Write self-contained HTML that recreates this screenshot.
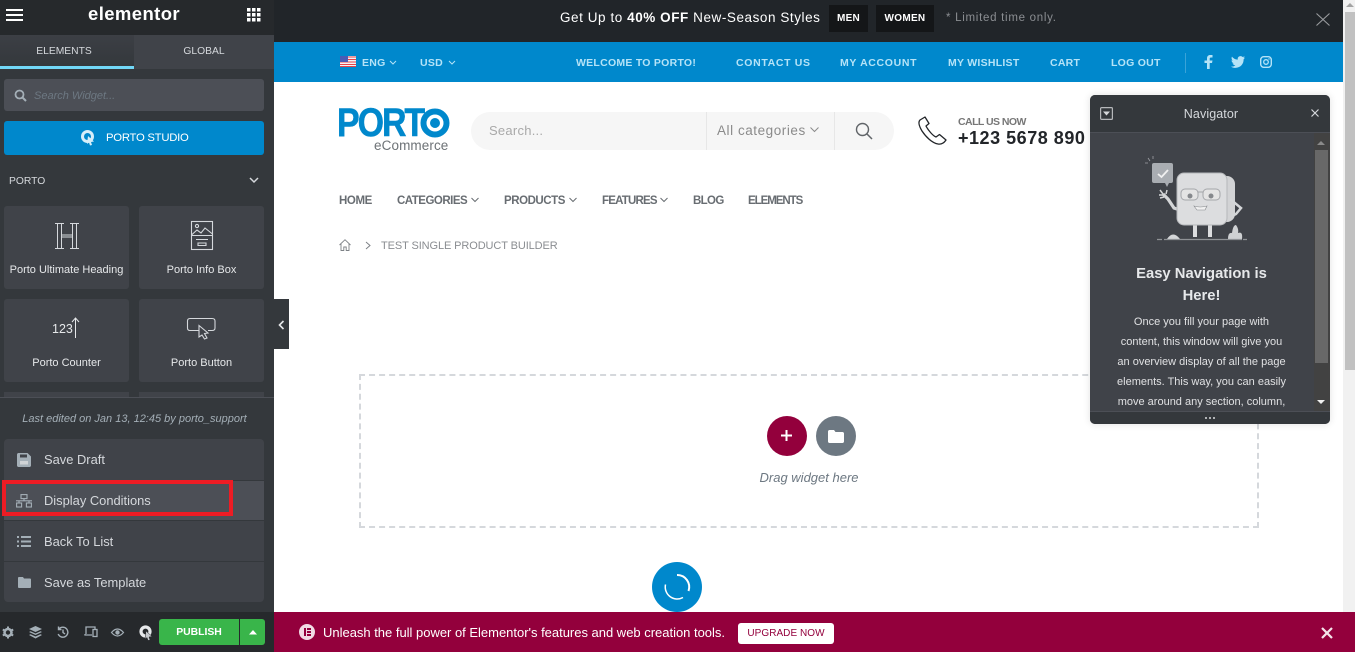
<!DOCTYPE html>
<html><head><meta charset="utf-8">
<style>
html,body{margin:0;padding:0;width:1355px;height:652px;overflow:hidden;background:#fff;font-family:"Liberation Sans",sans-serif}
#r{position:relative;width:1355px;height:652px;overflow:hidden}
.a{position:absolute}
.t{position:absolute;white-space:nowrap;line-height:16px}
.c{text-align:center}
svg{position:absolute;overflow:visible}
</style></head><body><div id="r">

<!-- main top -->
<div class="a" style="left:274px;top:0;width:1069px;height:42px;background:#212529"></div>
<div class="a" style="left:274px;top:42px;width:1069px;height:40px;background:#0088cc"></div>
<div class="a" style="left:1343px;top:0;width:12px;height:612px;background:#f1f1f1"></div>
<div class="a" style="left:1345px;top:12px;width:10px;height:358px;background:#c1c1c1"></div>
<svg style="left:1346px;top:2px" width="8" height="6"><path d="M4 1L8 5H0Z" fill="#a3a3a3"/></svg>

<div class="t" style="left:560px;top:10px;font-size:13.5px;color:#fff;letter-spacing:.56px">Get Up to <b>40% OFF</b> New-Season Styles</div>
<div class="a" style="left:829px;top:5px;width:39px;height:27px;background:#141618"></div>
<div class="t c" style="left:829px;top:11px;width:39px;font-size:10px;font-weight:bold;color:#fff;letter-spacing:.3px">MEN</div>
<div class="a" style="left:876px;top:5px;width:58px;height:27px;background:#141618"></div>
<div class="t c" style="left:876px;top:11px;width:58px;font-size:10px;font-weight:bold;color:#fff;letter-spacing:.3px">WOMEN</div>
<div class="t" style="left:946px;top:10px;font-size:11.5px;color:#8b8e92;letter-spacing:.72px">* Limited time only.</div>
<svg style="left:1316px;top:13px" width="14" height="13"><path d="M.5 .5L13.5 12.5M13.5 .5L.5 12.5" stroke="#9a9c9f" stroke-width="1.1" fill="none"/></svg>

<!-- blue bar -->
<svg style="left:340px;top:56px" width="16" height="11">
<rect width="16" height="11" fill="#f4f4f4"/><path d="M0 1h16M0 3.5h16M0 6h16M0 8.500h16" stroke="#e8424a" stroke-width="1.100"/><rect y="10" width="16" height="1" fill="#e8424a"/><rect width="8" height="6" fill="#4a5bb5"/></svg>
<div class="t" style="left:362px;top:55px;font-size:10.500px;font-weight:bold;color:#b5e3f7;letter-spacing:.3px">ENG</div>
<svg style="left:389px;top:60px" width="8" height="6"><path d="M1 1L4 4L7 1" stroke="#b5e3f7" fill="none"/></svg>
<div class="t" style="left:420px;top:55px;font-size:10.500px;font-weight:bold;color:#b5e3f7;letter-spacing:.3px">USD</div>
<svg style="left:448px;top:60px" width="8" height="6"><path d="M1 1L4 4L7 1" stroke="#b5e3f7" fill="none"/></svg>
<div class="t" style="left:576px;top:55px;font-size:10.500px;font-weight:bold;color:#b5e3f7;letter-spacing:.26px">WELCOME TO PORTO!</div>
<div class="t" style="left:736px;top:55px;font-size:10.500px;font-weight:bold;color:#b5e3f7;letter-spacing:.66px">CONTACT US</div>
<div class="t" style="left:840px;top:55px;font-size:10.500px;font-weight:bold;color:#b5e3f7;letter-spacing:.66px">MY ACCOUNT</div>
<div class="t" style="left:948px;top:55px;font-size:10.500px;font-weight:bold;color:#b5e3f7;letter-spacing:.26px">MY WISHLIST</div>
<div class="t" style="left:1050px;top:55px;font-size:10.500px;font-weight:bold;color:#b5e3f7;letter-spacing:.26px">CART</div>
<div class="t" style="left:1111px;top:55px;font-size:10.500px;font-weight:bold;color:#b5e3f7;letter-spacing:.26px">LOG OUT</div>
<div class="a" style="left:1185px;top:53px;width:1px;height:20px;background:#3aa3d8"></div>
<svg style="left:1204px;top:55px" width="10" height="14"><path d="M3 14V8H.5V5.500H3V3.500C3 1.200 4.300 0 6.300 0H8.500V2.500H7C6 2.500 5.700 3 5.700 3.800V5.500H8.500L8 8H5.700V14Z" fill="#b5e3f7"/></svg>
<svg style="left:1231px;top:56px" width="14" height="12"><path d="M14 1.500C13.500 1.800 12.900 2 12.300 2C13 1.600 13.400 1 13.600 .3C13 .7 12.300 .9 11.600 1C10.400 -.3 8.200 -.1 7.200 1.200C6.700 1.900 6.600 2.800 6.800 3.600C4.300 3.500 2.200 2.300 1 .6C.2 2 .6 3.800 1.900 4.700C1.400 4.700 .9 4.500 .5 4.300C.5 5.800 1.500 7 2.900 7.300C2.500 7.400 2 7.400 1.600 7.300C2 8.500 3.100 9.300 4.400 9.400C3.100 10.400 1.500 10.800 0 10.600C3.300 12.800 8 12.100 10.500 9.300C12 7.600 12.700 5.400 12.600 3.400C13.100 2.900 13.600 2.300 14 1.500Z" fill="#b5e3f7"/></svg>
<svg style="left:1260px;top:56px" width="12" height="12"><rect x=".7" y=".7" width="10.600" height="10.600" rx="3" fill="none" stroke="#b5e3f7" stroke-width="1.400"/><circle cx="6" cy="6" r="2.300" fill="none" stroke="#b5e3f7" stroke-width="1.300"/><circle cx="9" cy="3" r=".7" fill="#b5e3f7"/></svg>

<!-- logo -->
<div class="t" style="left:337px;top:104px;font-size:39.500px;line-height:38px;font-weight:bold;color:#0088cc;letter-spacing:-2.400px;-webkit-text-stroke:.5px #0088cc;transform:scaleX(.86);transform-origin:0 0">PORT</div>
<svg style="left:418px;top:108px" width="32" height="32"><circle cx="17" cy="15" r="11.500" fill="#fff" stroke="#0088cc" stroke-width="6"/><circle cx="17" cy="15" r="5" fill="#0088cc"/></svg>
<div class="t" style="left:374px;top:138px;font-size:13.500px;color:#6d7276;letter-spacing:.1px">eCommerce</div>

<!-- search -->
<div class="a" style="left:471px;top:112px;width:423px;height:38px;border-radius:19px;background:#f6f6f6"></div>
<div class="a" style="left:706px;top:112px;width:1px;height:38px;background:#e7e7e7"></div>
<div class="a" style="left:834px;top:112px;width:1px;height:38px;background:#e7e7e7"></div>
<div class="t" style="left:489px;top:123px;font-size:13px;color:#a9a9a9;letter-spacing:.25px">Search...</div>
<div class="t" style="left:717px;top:123px;font-size:13.500px;color:#8b8b8b;letter-spacing:.55px">All categories</div>
<svg style="left:810px;top:127px" width="9" height="6"><path d="M.5 .5L4.500 4.500L8.500 .5" stroke="#8b8b8b" fill="none"/></svg>
<svg style="left:855px;top:122px" width="18" height="18"><circle cx="7.500" cy="7.500" r="6" fill="none" stroke="#606468" stroke-width="1.400"/><path d="M12 12L17 17" stroke="#606468" stroke-width="1.500"/></svg>

<!-- phone -->
<svg style="left:918px;top:116px" width="29" height="29"><path d="M7 1L2 4C0 6 1 10 4 15C8 21 14 27 20 28C23 28.500 26 27 28 24L21.500 18.500L18 21C15 20 10 14 8 10L11 7.500Z" fill="none" stroke="#222529" stroke-width="1.300" stroke-linejoin="round"/></svg>
<div class="t" style="left:958px;top:114px;font-size:10.500px;font-weight:bold;color:#777;letter-spacing:-.55px">CALL US NOW</div>
<div class="t" style="left:958px;top:127px;font-size:18px;line-height:22px;font-weight:bold;color:#222529;letter-spacing:.52px">+123 5678 890</div>

<!-- nav -->
<div class="t" style="left:339px;top:193px;font-size:11.500px;font-weight:bold;color:#686d72;letter-spacing:-.4px">HOME</div>
<div class="t" style="left:397px;top:193px;font-size:11.500px;font-weight:bold;color:#686d72;letter-spacing:-.5px">CATEGORIES</div>
<svg style="left:471px;top:197px" width="8" height="6"><path d="M.5 1L4 4.500L7.500 1" stroke="#686d72" fill="none"/></svg>
<div class="t" style="left:504px;top:193px;font-size:11.500px;font-weight:bold;color:#686d72;letter-spacing:-.45px">PRODUCTS</div>
<svg style="left:569px;top:197px" width="8" height="6"><path d="M.5 1L4 4.500L7.500 1" stroke="#686d72" fill="none"/></svg>
<div class="t" style="left:602px;top:193px;font-size:11.500px;font-weight:bold;color:#686d72;letter-spacing:-.8px">FEATURES</div>
<svg style="left:660px;top:197px" width="8" height="6"><path d="M.5 1L4 4.500L7.500 1" stroke="#686d72" fill="none"/></svg>
<div class="t" style="left:693px;top:193px;font-size:11.500px;font-weight:bold;color:#686d72;letter-spacing:-.65px">BLOG</div>
<div class="t" style="left:748px;top:193px;font-size:11.500px;font-weight:bold;color:#686d72;letter-spacing:-1.05px">ELEMENTS</div>

<!-- breadcrumb -->
<svg style="left:339px;top:239px" width="12" height="12"><path d="M.5 6L6 .7L11.500 6M2 5V11.500H4.800V8H7.200V11.500H10V5" fill="none" stroke="#7d8186" stroke-width=".9"/></svg>
<svg style="left:365px;top:241px" width="6" height="9"><path d="M1 1L5 4.500L1 8" fill="none" stroke="#7d8186"/></svg>
<div class="t" style="left:381px;top:238px;font-size:11px;color:#8a8d91;letter-spacing:-.1px">TEST SINGLE PRODUCT BUILDER</div>

<!-- drop zone -->
<div class="a" style="left:359px;top:374px;width:896px;height:150px;border:2px dashed #d5d8dc"></div>
<div class="a" style="left:767px;top:416px;width:40px;height:40px;border-radius:50%;background:#93003c"></div>
<svg style="left:780px;top:429px" width="13" height="13"><path d="M6.500 1V12M1 6.500H12" stroke="#fff" stroke-width="2"/></svg>
<div class="a" style="left:816px;top:416px;width:40px;height:40px;border-radius:50%;background:#6d7882"></div>
<svg style="left:828px;top:430px" width="16" height="13"><path d="M1.500 0H6L7.500 2H14.500C15.300 2 16 2.700 16 3.500V11.500C16 12.300 15.300 13 14.500 13H1.500C.7 13 0 12.300 0 11.500V1.500C0 .7 .7 0 1.500 0Z" fill="#fff"/></svg>
<div class="t c" style="left:709px;top:470px;width:200px;font-size:13px;font-style:italic;color:#6d7882">Drag widget here</div>

<div class="a" style="left:652px;top:562px;width:50px;height:50px;border-radius:50%;background:#0088cc"></div>
<svg style="left:664px;top:574px" width="26" height="26"><path d="M1.500 10.500A12 12 0 0 0 19 23.500" fill="none" stroke="#fff" stroke-width="1.500"/><path d="M13 1A12 12 0 0 1 24.500 17" fill="none" stroke="#fff" stroke-width="2"/></svg>

<!-- bottom promo -->
<div class="a" style="left:274px;top:612px;width:1081px;height:40px;background:#93003c"></div>
<div class="a" style="left:299px;top:624px;width:16px;height:16px;border-radius:50%;background:#f1dbe4"></div>
<div class="a" style="left:304px;top:628px;width:1.500px;height:8px;background:#93003c"></div>
<div class="a" style="left:307px;top:628px;width:4px;height:1.500px;background:#93003c"></div>
<div class="a" style="left:307px;top:631px;width:4px;height:1.500px;background:#93003c"></div>
<div class="a" style="left:307px;top:634px;width:4px;height:1.500px;background:#93003c"></div>
<div class="t" style="left:323px;top:625px;font-size:13px;font-weight:500;color:#fff;letter-spacing:-.012px">Unleash the full power of Elementor's features and web creation tools.</div>
<div class="a" style="left:738px;top:623px;width:96px;height:21px;border-radius:3px;background:#fff"></div>
<div class="t c" style="left:738px;top:626px;width:96px;font-size:10px;color:#93003c;letter-spacing:.05px">UPGRADE NOW</div>
<svg style="left:1321px;top:627px" width="12" height="12"><path d="M1 1L11 11M11 1L1 11" stroke="#f5e4ea" stroke-width="2.200"/></svg>

<!-- Navigator -->
<div class="a" style="left:1090px;top:95px;width:240px;height:329px;border-radius:5px;background:#404349;box-shadow:0 0 8px rgba(0,0,0,.12);overflow:hidden">
  <div class="a" style="left:0;top:0;width:240px;height:37px;background:#34383c;border-bottom:1px solid #4c4f56"></div>
  <div class="a" style="left:224px;top:38px;width:16px;height:278px;background:#424242"></div>
  <div class="a" style="left:225px;top:55px;width:13px;height:213px;background:#686868"></div>
  <div class="a" style="left:0;top:316px;width:240px;height:13px;background:#34383c;border-top:1px solid #4c4f56;box-sizing:border-box"></div>
</div>
<svg style="left:1316px;top:140px" width="10" height="6"><path d="M5 1L9 5H1Z" fill="#8a8a8a"/></svg>
<svg style="left:1316px;top:399px" width="10" height="6"><path d="M5 5L9 1H1Z" fill="#f0f0f0"/></svg>
<svg style="left:1100px;top:107px" width="13" height="13"><rect x=".6" y=".6" width="11.800" height="11.800" rx="1" fill="none" stroke="#b5b7ba" stroke-width="1.200"/><path d="M3 4.500H10L6.500 8.500Z" fill="#d5d7da"/></svg>
<div class="t c" style="left:1150px;top:106px;width:122px;font-size:12.500px;color:#d5d8dc;letter-spacing:.1px">Navigator</div>
<svg style="left:1310px;top:108px" width="10" height="10"><path d="M1.500 1.500L8.500 8.500M8.500 1.500L1.500 8.500" stroke="#d5d8dc" stroke-width="1.200"/></svg>
<svg style="left:1205px;top:417px" width="10" height="2" fill="#b0b2b5"><rect width="2" height="2"/><rect x="4" width="2" height="2"/><rect x="8" width="2" height="2"/></svg>

<!-- Illustration -->
<svg style="left:1130px;top:150px" width="130" height="100">
<path d="M20 11l-2-3M23 9v-3M18 13h-3" stroke="#9ea1a6" stroke-width=".8"/>
<rect x="22" y="13" width="21" height="20" rx="2" fill="#a9adb2"/>
<path d="M35 33L37 37L39 33Z" fill="#a9adb2"/>
<path d="M28 24L31.500 27L38 20" fill="none" stroke="#f0f0f0" stroke-width="1.800"/>
<path d="M33 44L38 49L44 58L50 60" fill="none" stroke="#d4d6d8" stroke-width="3.200"/>
<path d="M33 44l-3-4M36 44l1-4M33 45l-4 0M34 47l-4 1" stroke="#d4d6d8" stroke-width="1.500"/>
<rect x="55" y="26" width="50" height="46" rx="8" fill="#d2d3d5"/>
<path d="M100 49L111 58L106 64L102 66" fill="none" stroke="#d4d6d8" stroke-width="2.500"/>
<path d="M65 74V87M80 74V87" stroke="#dcdddf" stroke-width="4"/>
<rect x="47" y="23" width="50" height="52" rx="7" fill="#dcdddf" stroke="#b5b7ba"/>
<rect x="51" y="39" width="17" height="11" rx="4" fill="#e4e4e4" stroke="#a4a6aa"/>
<rect x="73" y="39" width="17" height="11" rx="4" fill="#e4e4e4" stroke="#a4a6aa"/>
<path d="M68 42h5" stroke="#a4a6aa"/>
<circle cx="60" cy="46" r="2.500" fill="#85888c"/><circle cx="81" cy="46" r="2.500" fill="#85888c"/>
<path d="M64 56Q70 58 77 56L75 60H67Z" fill="#f1f1f1" stroke="#85888c" stroke-width=".6"/>
<path d="M37 89Q43 80 50 89Z" fill="#d4d6d8"/>
<path d="M98 89Q98 82 102 83Q103 75 106 75Q109 79 108 83Q113 81 112 89Z" fill="#cfd1d3"/>
<path d="M27 89.500H32M34 89.500H112M113 89.500H117" stroke="#8f9296" stroke-width="1.200"/>
</svg>

<div class="t c" style="left:1100px;top:263px;width:203px;font-size:14.800px;line-height:22px;font-weight:bold;color:#e6e8ea;white-space:normal">Easy Navigation is<br>Here!</div>
<div class="t c" style="left:1100px;top:312px;width:203px;font-size:11px;line-height:20px;color:#e0e1e3">Once you fill your page with<br>content, this window will give you<br>an overview display of all the page<br>elements. This way, you can easily<br>move around any section, column,</div>

<!-- Sidebar -->
<div class="a" style="left:0;top:0;width:274px;height:652px;background:#34383c"></div>
<div class="a" style="left:0;top:0;width:274px;height:35px;background:#26292c"></div>
<div class="a" style="left:6px;top:9px;width:17px;height:2px;background:#fff"></div>
<div class="a" style="left:6px;top:14px;width:17px;height:2px;background:#fff"></div>
<div class="a" style="left:6px;top:19px;width:17px;height:2px;background:#fff"></div>
<div class="t" style="left:88px;top:4px;font-size:18.500px;line-height:20px;font-weight:bold;color:#fff;letter-spacing:.4px">elementor</div>
<svg style="left:247px;top:8px" width="14" height="14" fill="#fff"><rect width="3.500" height="3.500"/><rect x="5" width="3.500" height="3.500"/><rect x="10" width="3.500" height="3.500"/><rect y="5" width="3.500" height="3.500"/><rect x="5" y="5" width="3.500" height="3.500"/><rect x="10" y="5" width="3.500" height="3.500"/><rect y="10" width="3.500" height="3.500"/><rect x="5" y="10" width="3.500" height="3.500"/><rect x="10" y="10" width="3.500" height="3.500"/></svg>

<div class="a" style="left:0;top:35px;width:134px;height:31px;background:linear-gradient(#3c3f45,#34383c)"></div>
<div class="a" style="left:0;top:66px;width:134px;height:3px;background:#71d7f7"></div>
<div class="a" style="left:134px;top:35px;width:140px;height:34px;background:#404349"></div>
<div class="t c" style="left:0;top:44px;width:128px;font-size:10.300px;color:#d5d8dc">ELEMENTS</div>
<div class="t c" style="left:134px;top:44px;width:140px;font-size:10.300px;color:#d5d8dc">GLOBAL</div>

<div class="a" style="left:4px;top:79px;width:260px;height:32px;border-radius:3px;background:#4c4f56"></div>
<svg style="left:14px;top:89px" width="13" height="13"><circle cx="5.500" cy="5.500" r="4" fill="none" stroke="#a4afb7" stroke-width="1.800"/><path d="M8.500 8.500L12 12" stroke="#a4afb7" stroke-width="2"/></svg>
<div class="t" style="left:34px;top:88px;font-size:11px;font-style:italic;color:#6d7882">Search Widget...</div>

<div class="a" style="left:4px;top:121px;width:260px;height:34px;border-radius:3px;background:#0088cc"></div>
<svg style="left:81px;top:130px" width="14" height="16"><circle cx="6.500" cy="6.500" r="5" fill="none" stroke="#d7eef9" stroke-width="3"/><path d="M7 6L13 11.500L10 12L11 15L9 15.500L8 12.500L6 14Z" fill="#d7eef9"/></svg>
<div class="t" style="left:106px;top:130px;font-size:11.300px;letter-spacing:-.25px;color:#fff">PORTO STUDIO</div>

<div class="t" style="left:9px;top:174px;font-size:10.300px;color:#d5d8dc">PORTO</div>
<svg style="left:249px;top:177px" width="10" height="7"><path d="M1 1L5 5L9 1" stroke="#d5d8dc" stroke-width="1.500" fill="none"/></svg>

<div class="a" style="left:4px;top:206px;width:125px;height:83px;border-radius:3px;background:#404349"></div>
<div class="a" style="left:139px;top:206px;width:125px;height:83px;border-radius:3px;background:#404349"></div>
<div class="a" style="left:4px;top:299px;width:125px;height:83px;border-radius:3px;background:#404349"></div>
<div class="a" style="left:139px;top:299px;width:125px;height:83px;border-radius:3px;background:#404349"></div>
<div class="a" style="left:4px;top:392px;width:125px;height:5px;background:#404349"></div>
<div class="a" style="left:139px;top:392px;width:125px;height:5px;background:#404349"></div>

<svg style="left:55px;top:223px" width="24" height="26" fill="none" stroke="#d5d8dc" stroke-width="1"><path d="M0 .5H9M15 .5H24M0 25.500H9M15 25.500H24M2.500 .5V25.500M6.500 .5V25.500M17.500 .5V25.500M21.500 .5V25.500M6.500 12H17.500M6.500 14H17.500"/></svg>
<svg style="left:191px;top:221px" width="22" height="29" fill="none" stroke="#d5d8dc" stroke-width="1.100"><rect x=".5" y=".5" width="21" height="28"/><path d="M.5 14L6 9L10 12L14 7L21.500 13M.5 14.500H21.500M5 18.500H17M7 22H15V24.500H7Z"/><circle cx="6" cy="5" r="1.600"/></svg>
<div class="t c" style="left:4px;top:262px;width:125px;font-size:11px;color:#e6e8ea">Porto Ultimate Heading</div>
<div class="t c" style="left:139px;top:262px;width:125px;font-size:11px;color:#e6e8ea">Porto Info Box</div>

<div class="t" style="left:52px;top:321px;font-size:12.500px;color:#e6e8ea">123</div>
<svg style="left:71px;top:317px" width="9" height="21"><path d="M4.500 21V1M1 5L4.500 1L8 5" fill="none" stroke="#e6e8ea" stroke-width="1"/></svg>
<svg style="left:187px;top:318px" width="29" height="22" fill="none" stroke="#d5d8dc" stroke-width="1.100"><path d="M12 12.500H3Q.5 12.500 .5 10V3Q.5 .5 3 .5H25Q28 .5 28 3V10Q28 12.500 25 12.500H21"/><path d="M12 7.500L21 15L17.500 15.500L20 20L17.500 21L15 17L12 19Z" fill="#404349"/></svg>
<div class="t c" style="left:4px;top:355px;width:125px;font-size:11px;color:#e6e8ea">Porto Counter</div>
<div class="t c" style="left:139px;top:355px;width:125px;font-size:11px;color:#e6e8ea">Porto Button</div>

<div class="a" style="left:0;top:397px;width:274px;height:215px;background:#34383c;border-top:1px solid #4c4f56;box-sizing:border-box"></div>
<div class="t c" style="left:0;top:411px;width:269px;font-size:11px;font-style:italic;color:#a4afb7">Last edited on Jan 13, 12:45 by porto_support</div>

<div class="a" style="left:4px;top:439px;width:260px;height:163px;border-radius:4px;background:#404349"></div>
<div class="a" style="left:4px;top:480px;width:260px;height:40px;background:#4c4f56"></div>
<div class="a" style="left:4px;top:480px;width:260px;height:1px;background:#34383c"></div>
<div class="a" style="left:4px;top:520px;width:260px;height:1px;background:#34383c"></div>
<div class="a" style="left:4px;top:561px;width:260px;height:1px;background:#34383c"></div>

<svg style="left:17px;top:453px" width="14" height="14"><path d="M1.500 0H10.500L14 3.500V12.500C14 13.300 13.300 14 12.500 14H1.500C.7 14 0 13.300 0 12.500V1.500C0 .7 .7 0 1.500 0Z" fill="#a4afb7"/><rect x="3" y="1.500" width="7" height="3" fill="#404349"/><rect x="3" y="8" width="8" height="3.500" fill="#d0d3d6"/></svg>
<div class="t" style="left:44px;top:452px;font-size:12.900px;color:#d5d8dc">Save Draft</div>

<svg style="left:16px;top:494px" width="16" height="14" fill="none" stroke="#a4afb7" stroke-width="1.100"><rect x="5" y=".6" width="6" height="4"/><rect x=".6" y="9" width="5" height="4"/><rect x="10.400" y="9" width="5" height="4"/><path d="M0 6.800H16M3 6.800V9M13 6.800V9M8 4.600V6.800"/></svg>
<div class="t" style="left:44px;top:493px;font-size:12.900px;color:#d5d8dc">Display Conditions</div>

<svg style="left:17px;top:536px" width="14" height="11" fill="#a4afb7"><rect width="2" height="2"/><rect x="4" width="10" height="2"/><rect y="4.500" width="2" height="2"/><rect x="4" y="4.500" width="10" height="2"/><rect y="9" width="2" height="2"/><rect x="4" y="9" width="10" height="2"/></svg>
<div class="t" style="left:44px;top:534px;font-size:12.900px;color:#d5d8dc">Back To List</div>

<svg style="left:18px;top:577px" width="13" height="11"><path d="M1 0H5L6 1.500H12C12.600 1.500 13 1.900 13 2.500V10C13 10.600 12.600 11 12 11H1C.4 11 0 10.600 0 10V1C0 .4 .4 0 1 0Z" fill="#a4afb7"/></svg>
<div class="t" style="left:44px;top:575px;font-size:12.900px;color:#d5d8dc">Save as Template</div>

<!-- red highlight -->
<div class="a" style="left:2px;top:480px;width:223px;height:28px;border:4px solid #ed1c24"></div>

<!-- collapse -->
<div class="a" style="left:274px;top:299px;width:15px;height:50px;background:#34383c"></div>
<svg style="left:278px;top:320px" width="7" height="10"><path d="M5.500 1L1.500 5L5.500 9" stroke="#e6e8ea" stroke-width="1.600" fill="none"/></svg>

<!-- bottom bar -->
<div class="a" style="left:0;top:612px;width:274px;height:40px;background:#26292c"></div>
<svg style="left:2px;top:626px" width="12" height="13"><circle cx="6" cy="6.500" r="3.500" fill="none" stroke="#a4afb7" stroke-width="2.600"/><path d="M6 .5V2.500M6 10.500V12.500M.8 3.500L2.500 4.500M9.500 8.500L11.200 9.500M.8 9.500L2.500 8.500M9.500 4.500L11.200 3.500" stroke="#a4afb7" stroke-width="2"/></svg>
<svg style="left:29px;top:626px" width="13" height="13" fill="#a4afb7"><path d="M6.500 0L13 3L6.500 6L0 3Z"/><path d="M1.500 5.200L6.500 7.500L11.500 5.200L13 6L6.500 9L0 6Z"/><path d="M1.500 8.200L6.500 10.500L11.500 8.200L13 9L6.500 12.500L0 9Z"/></svg>
<svg style="left:57px;top:626px" width="12" height="13" fill="none" stroke="#a4afb7" stroke-width="1.400"><path d="M2 3A5 5 0 1 1 1.200 8M1.500 .5V3.500H4.500M6 3.500V6.500L8 8"/></svg>
<svg style="left:84px;top:626px" width="14" height="12" fill="none" stroke="#a4afb7" stroke-width="1.300"><path d="M8 9H1V8M2 8V1H11V3"/><rect x="9" y="3.500" width="4" height="7"/></svg>
<svg style="left:111px;top:628px" width="13" height="9"><path d="M.5 4.500Q6.500 -2.500 12.500 4.500Q6.500 11.500 .5 4.500Z" fill="none" stroke="#a4afb7" stroke-width="1.200"/><circle cx="6.500" cy="4.500" r="2.200" fill="#a4afb7"/></svg>
<svg style="left:139px;top:625px" width="14" height="16"><circle cx="6.500" cy="6.500" r="4.500" fill="none" stroke="#e6e8ea" stroke-width="3.200"/><path d="M7 6L13 11.500L10 12L11 15L9 15.500L8 12.500L6 14Z" fill="#c5c8cc" stroke="#26292c" stroke-width=".5"/></svg>
<div class="a" style="left:159px;top:619px;width:80px;height:26px;border-radius:3px 0 0 3px;background:#39b54a"></div>
<div class="a" style="left:240px;top:619px;width:25px;height:26px;border-radius:0 3px 3px 0;background:#39b54a"></div>
<div class="t c" style="left:159px;top:625px;width:80px;font-size:10.400px;font-weight:bold;color:#fff">PUBLISH</div>
<svg style="left:249px;top:630px" width="8" height="5"><path d="M4 0L8 4.500H0Z" fill="#fff"/></svg>

</div></body></html>
